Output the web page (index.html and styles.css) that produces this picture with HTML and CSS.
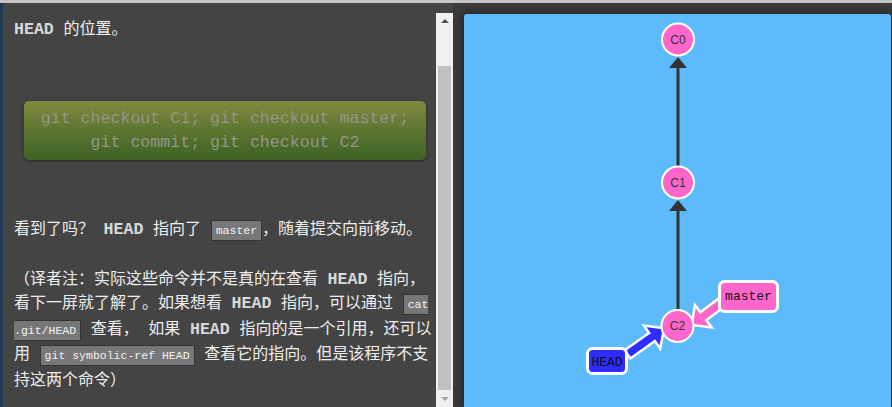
FILE: index.html
```html
<!DOCTYPE html>
<html lang="zh-CN">
<head>
<meta charset="utf-8">
<title>HEAD</title>
<link rel="stylesheet" href="styles.css">
</head>
<body>
<div class="topbar"></div>
<div class="main">
  <div class="edge"></div>
  <div class="pane">
    <div class="text">
      <p class="first"><b class="kw">HEAD</b> 的位置。</p>
      <div class="cmd">git checkout C1; git checkout master;<br>git commit; git checkout C2</div>
      <p>看到了吗？ <b class="kw">HEAD</b> 指向了 <code>master</code>，随着提交向前移动。</p>
      <p>（译者注：实际这些命令并不是真的在查看 <b class="kw">HEAD</b> 指向，看下一屏就了解了。如果想看 <b class="kw">HEAD</b> 指向，可以通过 <code>cat .git/HEAD</code> 查看， 如果 <b class="kw">HEAD</b> 指向的是一个引用，还可以用 <code>git symbolic-ref HEAD</code> 查看它的指向。但是该程序不支持这两个命令）</p>
    </div>
    <div class="scrollbar">
      <div class="sb-btn"><span class="tri-up"></span></div>
      <div class="sb-thumb"></div>
      <div class="sb-btn"><span class="tri-down"></span></div>
    </div>
  </div>
  <div class="viz">
    <div class="canvas">
      <svg class="graph" width="427" height="393" viewBox="0 0 427 393">
        <g class="edge-lines">
          <line x1="214" y1="53" x2="214" y2="152"/>
          <line x1="214" y1="196" x2="214" y2="296"/>
        </g>
        <g class="edge-heads">
          <polygon points="214,43 205,54 223,54"/>
          <polygon points="214,186 205,197 223,197"/>
        </g>
        <polygon class="arrow head-arrow" points="160.6,336.3 185.1,318.9 179.9,311.6 200.2,314.3 196.1,334.4 190.9,327.1 166.4,344.5"/>
        <polygon class="arrow master-arrow" points="260.3,280.3 236.3,298.3 230.9,291.1 227.7,311 247.7,313.5 242.3,306.3 266.3,288.3"/>
        <rect class="branch head-box" x="123.5" y="334.5" width="39" height="25" rx="5"/>
        <text class="branch-label" x="143" y="351.5">HEAD</text>
        <rect class="branch master-box" x="255.5" y="267.5" width="58" height="30" rx="5"/>
        <text class="branch-label" x="284.5" y="286">master</text>
        <circle class="commit" cx="214" cy="25.5" r="16"/>
        <text class="commit-label" x="214" y="29.8">C0</text>
        <circle class="commit" cx="214" cy="168.5" r="16"/>
        <text class="commit-label" x="214" y="172.8">C1</text>
        <circle class="commit" cx="213.5" cy="312" r="16"/>
        <text class="commit-label" x="213.5" y="316.3">C2</text>
      </svg>
    </div>
  </div>
</div>
</body>
</html>
```
FILE: styles.css
```css
html, body {
  margin: 0;
  padding: 0;
  width: 892px;
  height: 407px;
  overflow: hidden;
  background: #444;
}
.topbar {
  height: 3px;
  background: #c4c4c4;
}
.main {
  display: flex;
  height: 404px;
}
.edge {
  width: 3px;
  background: #1d3b58;
}
.pane {
  width: 450px;
  display: flex;
  background: #444;
}
.text {
  flex: 1;
  padding: 15px 0 0 11px;
  overflow: hidden;
  color: #eee;
  font-family: "Liberation Mono", "Noto Sans CJK SC", monospace;
  font-size: 16px;
  line-height: 24.5px;
}
.text p {
  margin: 24.5px 0;
}
.text p.first {
  margin-top: 0;
}
.kw {
  font-weight: bold;
  font-size: 16.6px;
  color: #d8d8d8;
}
code {
  font-family: "Liberation Mono", monospace;
  font-size: 11.5px;
  color: #f2f2f2;
  background: #777;
  border: 1px solid #333;
  padding: 3px 4px;
}
.cmd {
  margin: 58px 10px;
  padding: 6px 0 5px;
  border-radius: 5px;
  background: linear-gradient(#7f8a3f, #3c6224);
  box-shadow: 0 1px 3px rgba(0, 0, 0, 0.45);
  color: #959589;
  font-family: "Liberation Mono", monospace;
  font-size: 16.6px;
  line-height: 24px;
  text-align: center;
}
.scrollbar {
  width: 17px;
  margin-top: 10px;
  background: #f0f0f0;
  display: flex;
  flex-direction: column;
}
.sb-btn {
  height: 17px;
  display: flex;
  align-items: center;
  justify-content: center;
}
.tri-up {
  width: 0;
  height: 0;
  border-left: 4px solid transparent;
  border-right: 4px solid transparent;
  border-bottom: 4px solid #505050;
}
.tri-down {
  width: 0;
  height: 0;
  border-left: 4px solid transparent;
  border-right: 4px solid transparent;
  border-top: 4px solid #a3a3a3;
}
.sb-thumb {
  margin: 36px 2px 0;
  height: 330px;
  background: #c1c1c1;
}
.viz {
  flex: 1;
  background: #3a3a3a;
  padding: 11px 1px 0 11px;
}
.canvas {
  height: 100%;
  background: #5dbbfb;
  border-radius: 3px 3px 0 0;
  box-shadow: 0 0 8px rgba(0, 0, 0, 0.55);
  overflow: hidden;
}
.graph {
  display: block;
}
.edge-lines line {
  stroke: #333;
  stroke-width: 3;
}
.edge-heads polygon {
  fill: #333;
}
.arrow {
  stroke: #fff;
  stroke-width: 2.5;
  stroke-linejoin: miter;
}
.head-arrow {
  fill: #2d2dff;
}
.master-arrow {
  fill: #ff66cc;
}
.branch {
  stroke: #fff;
  stroke-width: 3;
}
.head-box {
  fill: #2d2dff;
}
.master-box {
  fill: #ff66cc;
}
.branch-label {
  font-family: "Liberation Mono", monospace;
  font-size: 13px;
  fill: #111;
  text-anchor: middle;
}
.commit {
  fill: #ff66cc;
  stroke: #fff;
  stroke-width: 2;
}
.commit-label {
  font-family: "Liberation Sans", sans-serif;
  font-size: 12px;
  fill: #333;
  text-anchor: middle;
}
```
